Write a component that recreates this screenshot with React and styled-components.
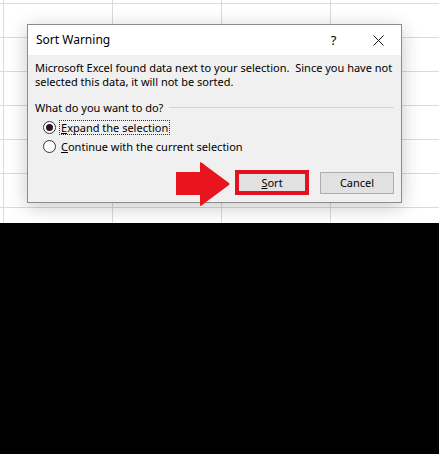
import React from "react";
import styled, { createGlobalStyle } from "styled-components";

const GlobalStyle = createGlobalStyle`
  html, body { margin: 0; padding: 0; background: #000; }
  body { font-family: "Noto Sans", "DejaVu Sans", sans-serif; }
`;

const Page = styled.div`
  width: 439px;
  height: 454px;
  display: flex;
  flex-direction: column;
  background: #000;
  overflow: hidden;
`;

const Sheet = styled.div`
  position: relative;
  height: 223px;
  background-color: #fff;
  background-image:
    linear-gradient(to right, #dadada 1px, transparent 1px),
    linear-gradient(to bottom, #dadada 1px, transparent 1px);
  background-size: 109px 34px;
  background-position: 3px 3px;
`;

const Dialog = styled.div`
  position: absolute;
  left: 27px;
  top: 24px;
  width: 373px;
  border: 1px solid #8c8c8c;
  background: #f0f0f0;
  box-shadow: 0 4px 18px rgba(0, 0, 0, 0.22);
  font-size: 11px;
  color: #000;
`;

const TitleBar = styled.div`
  height: 30px;
  display: flex;
  align-items: center;
  background: #fff;
  padding-left: 8px;
`;

const Title = styled.div`
  flex: 1;
  font-size: 12px;
  margin-top: -2px;
`;

const TitleButton = styled.div`
  width: 45px;
  height: 30px;
  display: flex;
  align-items: center;
  justify-content: center;
  font-size: 13px;
`;

const Body = styled.div`
  padding: 6px 7px 7px 7px;
`;

const Message = styled.p`
  margin: 0;
  line-height: 14px;
`;

const Question = styled.div`
  display: flex;
  align-items: center;
  margin-top: 12px;
  line-height: 13px;
`;

const Rule = styled.div`
  flex: 1;
  height: 1px;
  margin-left: 6px;
  background: #d5d5d5;
`;

const Options = styled.div`
  display: flex;
  flex-direction: column;
  margin-top: 4px;
  padding-left: 8px;
`;

const Option = styled.label`
  display: flex;
  align-items: center;
  height: 19px;
  gap: 4px;
`;

const Radio = styled.span`
  width: 11px;
  height: 11px;
  border: 1px solid #333;
  border-radius: 50%;
  background: #fff;
  display: flex;
  align-items: center;
  justify-content: center;
  &::after {
    content: "";
    width: 7px;
    height: 7px;
    border-radius: 50%;
    background: ${(p) => (p.$checked ? "#2a1424" : "transparent")};
  }
`;

const OptionText = styled.span`
  padding: 0 1px;
  line-height: 13px;
  outline: ${(p) => (p.$focused ? "1px dotted #333" : "none")};
`;

const Footer = styled.div`
  display: flex;
  justify-content: flex-end;
  align-items: center;
  gap: 11px;
  margin-top: 14px;
  position: relative;
`;

const Button = styled.div`
  width: ${(p) => (p.$marked ? "66px" : "72px")};
  height: ${(p) => (p.$marked ? "17px" : "20px")};
  border: ${(p) => (p.$marked ? "4px solid #e3121f" : "1px solid #adadad")};
  background: #e1e1e1;
  display: flex;
  align-items: center;
  justify-content: center;
  font-size: 11px;
`;

const Arrow = styled.svg`
  position: absolute;
  left: 141px;
  top: -8px;
`;

const U = styled.span`
  text-decoration: underline;
`;

const Blank = styled.div`
  flex: 1;
  background: #000;
`;

export default function App() {
  return (
    <Page>
      <GlobalStyle />
      <Sheet>
        <Dialog>
          <TitleBar>
            <Title>Sort Warning</Title>
            <TitleButton>?</TitleButton>
            <TitleButton>
              <svg width="11" height="11" viewBox="0 0 11 11">
                <path d="M0.5 0.5 L10.5 10.5 M10.5 0.5 L0.5 10.5" stroke="#111" strokeWidth="1" />
              </svg>
            </TitleButton>
          </TitleBar>
          <Body>
            <Message>
              Microsoft Excel found data next to your selection.&nbsp; Since you have not
              <br />
              selected this data, it will not be sorted.
            </Message>
            <Question>
              What do you want to do?
              <Rule />
            </Question>
            <Options>
              <Option>
                <Radio $checked />
                <OptionText $focused>
                  <U>E</U>xpand the selection
                </OptionText>
              </Option>
              <Option>
                <Radio />
                <OptionText>
                  <U>C</U>ontinue with the current selection
                </OptionText>
              </Option>
            </Options>
            <Footer>
              <Arrow width="56" height="44" viewBox="0 0 56 44">
                <path
                  d="M0 10 H24 V0 Q27 1 30 4 L53 21 Q54 22 53 23 L30 40 Q27 43 24 44 V33 H0 Z"
                  fill="#e8141e"
                />
              </Arrow>
              <Button $marked>
                <span>
                  <U>S</U>ort
                </span>
              </Button>
              <Button>Cancel</Button>
            </Footer>
          </Body>
        </Dialog>
      </Sheet>
      <Blank />
    </Page>
  );
}
